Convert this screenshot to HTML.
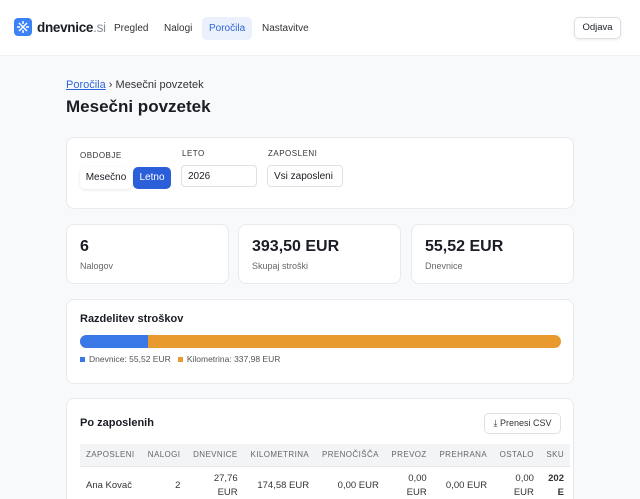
<!DOCTYPE html>
<html><head><meta charset="utf-8"><style>
*{box-sizing:border-box;margin:0;padding:0}
html,body{width:640px;height:499px;overflow:hidden}
body{background:#f8f9fb;font-family:"Liberation Sans",sans-serif;color:#1a1d24;position:relative}
.hdr{position:absolute;left:0;top:0;width:640px;height:56px;background:#fff;border-bottom:1px solid #eef0f3}
.logo{position:absolute;left:14px;top:18px;width:18px;height:18px;border-radius:4px;background:#3b82f6}
.brand{position:absolute;left:37px;top:20px;font-size:13.5px;font-weight:bold;letter-spacing:-0.3px}
.brand span{color:#8a8f98;font-weight:normal}
.nav{position:absolute;top:17px;height:23px;line-height:23px;font-size:10px;color:#333;padding:0 7px;border-radius:5px}
.out{position:absolute;left:574px;top:17px;width:47px;height:22px;border:1px solid #dde1e7;border-radius:5px;font-size:9.5px;text-align:center;line-height:20px;background:#fff;box-shadow:0 1px 3px rgba(0,0,0,.08)}
.card{position:absolute;background:#fff;border:1px solid #e8eaee;border-radius:8px}
.lbl{position:absolute;font-size:8px;letter-spacing:.5px;color:#333}
.inp{position:absolute;height:22px;border:1px solid #dde1e7;border-radius:4px;font-size:10px;line-height:22px;padding-left:6px}
.big{position:absolute;left:13px;top:13px;font-size:16px;font-weight:bold}
.sm{position:absolute;left:13px;top:36px;font-size:9px;color:#666}
th{font-size:8px;font-weight:normal;color:#666;letter-spacing:.4px;text-align:right;padding:0 6px;height:22px}
td{font-size:9.5px;color:#333;text-align:right;padding:0 6px;line-height:14px}
</style></head><body>
<div class="hdr">
<div class="logo"><svg width="18" height="18" viewBox="0 0 18 18" stroke="#fff" stroke-width="1.5" fill="none"><path d="M5 5l8 8M13 5l-8 8M9 3v3M9 12v3M3 9h3M12 9h3"/></svg></div>
<div class="brand">dnevnice<span>.si</span></div>
<div class="nav" style="left:107px">Pregled</div>
<div class="nav" style="left:157px">Nalogi</div>
<div class="nav" style="left:202px;background:#eaf1fd;color:#2f66d6">Poročila</div>
<div class="nav" style="left:255px">Nastavitve</div>
<div class="out">Odjava</div>
</div>
<div style="position:absolute;left:66px;top:79px;font-size:11px;color:#333"><span style="color:#2f66d6;text-decoration:underline">Poročila</span> › Mesečni povzetek</div>
<div style="position:absolute;left:66px;top:97px;font-size:17px;font-weight:bold">Mesečni povzetek</div>
<div class="card" style="left:66px;top:137px;width:508px;height:72px">
<div class="lbl" style="left:13px;top:13px">OBDOBJE</div>
<div class="lbl" style="left:115px;top:11px">LETO</div>
<div class="lbl" style="left:201px;top:11px">ZAPOSLENI</div>
<div style="position:absolute;left:13px;top:29px;width:52px;height:22px;font-size:10px;line-height:22px;text-align:center;border-radius:5px;box-shadow:0 1px 3px rgba(0,0,0,.1)">Mesečno</div>
<div style="position:absolute;left:66px;top:29px;width:38px;height:22px;font-size:10px;line-height:22px;text-align:center;border-radius:5px;background:#2b5fd9;color:#fff">Letno</div>
<div class="inp" style="left:114px;top:27px;width:76px">2026</div>
<div class="inp" style="left:200px;top:27px;width:76px">Vsi zaposleni</div>
</div>
<div class="card" style="left:66px;top:224px;width:163px;height:60px"><div class="big">6</div><div class="sm">Nalogov</div></div>
<div class="card" style="left:238px;top:224px;width:163px;height:60px"><div class="big">393,50 EUR</div><div class="sm">Skupaj stroški</div></div>
<div class="card" style="left:411px;top:224px;width:163px;height:60px"><div class="big">55,52 EUR</div><div class="sm">Dnevnice</div></div>
<div class="card" style="left:66px;top:299px;width:508px;height:85px">
<div style="position:absolute;left:13px;top:13px;font-size:11px;font-weight:bold">Razdelitev stroškov</div>
<div style="position:absolute;left:13px;top:35px;width:481px;height:13px;border-radius:7px;background:#e89a2f;overflow:hidden"><div style="width:68px;height:13px;background:#3b78e7"></div></div>
<div style="position:absolute;left:13px;top:54px;font-size:8.5px;color:#555"><span style="display:inline-block;width:5px;height:5px;background:#3b78e7;margin-right:4px"></span>Dnevnice: 55,52 EUR &nbsp;&nbsp;<span style="display:inline-block;width:5px;height:5px;background:#e89a2f;margin-right:4px"></span>Kilometrina: 337,98 EUR</div>
</div>
<div class="card" style="left:66px;top:398px;width:508px;height:120px;overflow:hidden">
<div style="position:absolute;left:13px;top:18px;font-size:11px;font-weight:bold">Po zaposlenih</div>
<div style="position:absolute;left:417px;top:14px;width:77px;height:21px;border:1px solid #dde1e7;border-radius:5px;font-size:9px;line-height:19px;text-align:center;color:#333">⤓ Prenesi CSV</div>
<table style="position:absolute;left:13px;top:45px;border-collapse:collapse;width:490px">
<tr style="background:#f3f4f6;border-bottom:1px solid #e5e7eb"><th style="text-align:left">ZAPOSLENI</th><th>NALOGI</th><th>DNEVNICE</th><th>KILOMETRINA</th><th>PRENOČIŠČA</th><th>PREVOZ</th><th>PREHRANA</th><th>OSTALO</th><th>SKU</th></tr>
<tr style="height:40px"><td style="text-align:left">Ana Kovač</td><td>2</td><td>27,76<br>EUR</td><td>174,58 EUR</td><td>0,00 EUR</td><td>0,00<br>EUR</td><td>0,00 EUR</td><td>0,00<br>EUR</td><td style="font-weight:bold">202<br>E</td></tr>
</table>
</div>
</body></html>
